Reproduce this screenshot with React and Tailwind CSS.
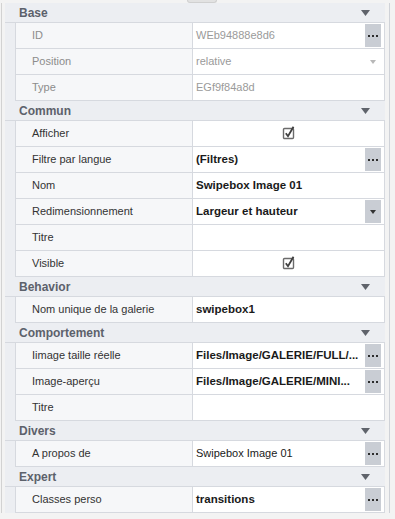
import React from 'react';

const sections = [
    {
        title: 'Base',
        rows: [
            { label: 'ID', value: 'WEb94888e8d6', muted: true, button: 'dots' },
            { label: 'Position', value: 'relative', muted: true, button: 'arrowLight' },
            { label: 'Type', value: 'EGf9f84a8d', muted: true },
        ],
    },
    {
        title: 'Commun',
        rows: [
            { label: 'Afficher', check: true },
            { label: 'Filtre par langue', value: '(Filtres)', bold: true, button: 'dots' },
            { label: 'Nom', value: 'Swipebox Image 01', bold: true },
            { label: 'Redimensionnement', value: 'Largeur et hauteur', bold: true, button: 'arrow' },
            { label: 'Titre', value: '' },
            { label: 'Visible', check: true },
        ],
    },
    {
        title: 'Behavior',
        rows: [{ label: 'Nom unique de la galerie', value: 'swipebox1', bold: true }],
    },
    {
        title: 'Comportement',
        rows: [
            { label: 'Iimage taille réelle', value: 'Files/Image/GALERIE/FULL/...', bold: true, button: 'dots' },
            { label: 'Image-aperçu', value: 'Files/Image/GALERIE/MINI...', bold: true, button: 'dots' },
            { label: 'Titre', value: '' },
        ],
    },
    {
        title: 'Divers',
        rows: [{ label: 'A propos de', value: 'Swipebox Image 01', button: 'dots' }],
    },
    {
        title: 'Expert',
        rows: [{ label: 'Classes perso', value: 'transitions', bold: true, button: 'dots' }],
    },
];

function CheckIcon() {
    return (
        <svg width="14" height="14" viewBox="0 0 14 14">
            <rect x="1.5" y="2.5" width="10" height="10" rx="1" fill="white" stroke="#6b6b6b" strokeWidth="1.4" />
            <path d="M3.8 7.2 L6 10.2 L11.5 0.8" fill="none" stroke="#3f3f3f" strokeWidth="1.8" />
        </svg>
    );
}

function CellButton({ type }) {
    if (type === 'dots') {
        return (
            <div className="w-[16px] h-[23px] mr-[3px] bg-[#c9cdd4] flex items-center justify-center gap-[2px]">
                <span className="w-[2px] h-[2px] bg-[#2c2c2c]"></span>
                <span className="w-[2px] h-[2px] bg-[#2c2c2c]"></span>
                <span className="w-[2px] h-[2px] bg-[#2c2c2c]"></span>
            </div>
        );
    }
    if (type === 'arrow') {
        return (
            <div className="w-[16px] h-[23px] mr-[3px] bg-[#c9cdd4] flex items-center justify-center">
                <svg width="6" height="4" viewBox="0 0 6 4">
                    <path d="M0 0 H6 L3 4 Z" fill="#333" />
                </svg>
            </div>
        );
    }
    return (
        <div className="w-[16px] h-[23px] mr-[3px] flex items-center justify-center">
            <svg width="6" height="4" viewBox="0 0 6 4">
                <path d="M0 0 H6 L3 4 Z" fill="#b8b8b8" />
            </svg>
        </div>
    );
}

function Row({ row, section }) {
    const labelColor = section === 'Base' ? 'text-[#8c8c8c]' : 'text-[#333333]';
    let valueColor = 'text-[#1a1a1a]';
    if (row.muted) valueColor = 'text-[#9a9a9a]';

    return (
        <div className="flex h-[26px]">
            <div className="w-[10px] bg-[#eceef2]"></div>
            <div className={`w-[177px] flex items-center pl-[16px] text-[11px] bg-[#f6f7f9] border-l border-b border-[#d6d9df] ${labelColor}`}>
                {row.label}
            </div>
            <div className="flex-1 flex items-center bg-white border-l border-b border-r border-[#d6d9df] min-w-0">
                {row.check ? (
                    <div className="flex-1 flex justify-center pb-[2px]">
                        <CheckIcon />
                    </div>
                ) : (
                    <div className={`flex-1 pl-[3px] truncate ${valueColor} ${row.bold ? 'font-bold' : 'text-[11px]'}`}>
                        {row.value}
                    </div>
                )}
                {row.button && <CellButton type={row.button} />}
            </div>
        </div>
    );
}

export default function App() {
    return (
        <div
            className="w-[395px] h-[519px] bg-[#f3f3f3] flex flex-col text-[11.5px] overflow-hidden"
            style={{ fontFamily: '"Liberation Sans", Arial, sans-serif' }}
        >
            {/* top strip with small tab */}
            <div className="h-[3px] flex justify-center">
                <div className="w-[30px] h-[3px] ml-[8px] bg-[#e2e2e2] border-x border-b border-[#d0d0d0] rounded-b"></div>
            </div>

            <div className="flex flex-1">
                {/* left edge */}
                <div className="w-[5px] flex">
                    <div className="w-[1px] ml-[1px] bg-[#d2d2d2] h-[510px]"></div>
                </div>

                {/* grid */}
                <div className="w-[380px] flex flex-col">
                    {sections.map((section) => (
                        <div key={section.title}>
                            <div className="h-[20px] bg-[#eceef2] border-b border-[#d6d9df] flex items-center justify-between pl-[14px] pr-[15px]">
                                <span className="font-bold text-[#5c616b] text-[12px]">{section.title}</span>
                                <svg width="9" height="6" viewBox="0 0 9 6">
                                    <path d="M0 0 H9 L4.5 6 Z" fill="#5f636b" />
                                </svg>
                            </div>
                            {section.rows.map((row, i) => (
                                <Row key={i} row={row} section={section.title} />
                            ))}
                        </div>
                    ))}
                </div>

                {/* right edge */}
                <div className="w-[10px] flex">
                    <div className="w-[1px] ml-[4px] bg-[#cfd2d8] h-[510px]"></div>
                </div>
            </div>
        </div>
    );
}
